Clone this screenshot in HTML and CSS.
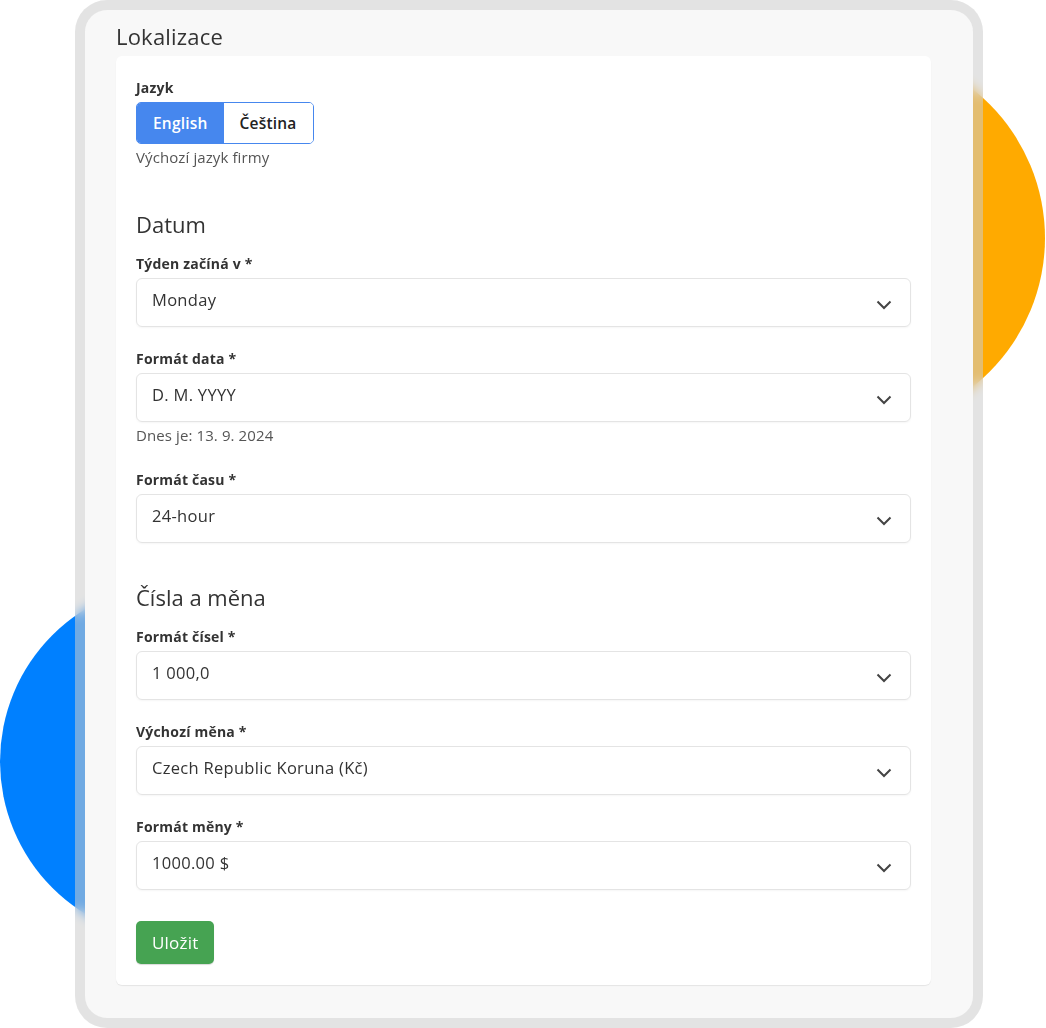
FILE: index.html
```html
<!doctype html>
<html lang="cs">
<head>
    <meta charset="utf-8">
    <title>Lokalizace</title>
    <link rel="stylesheet" href="styles.css">
</head>
<body>

<!-- Decorative circles behind the frame -->
<div class="blob blob-orange"></div>
<div class="blob blob-blue"></div>

<div class="frame">
    <h1 class="page-title">Lokalizace</h1>

    <form class="card">
        <div class="field">
            <div class="field-label">Jazyk</div>
            <div class="toggle">
                <button type="button" class="toggle-btn is-active">English</button>
                <button type="button" class="toggle-btn">Čeština</button>
            </div>
            <div class="field-help">Výchozí jazyk firmy</div>
        </div>

        <h2 class="section-title">Datum</h2>

        <div class="field">
            <div class="field-label">Týden začíná v *</div>
            <div class="select">
                <span>Monday</span>
                <svg class="chevron" viewBox="0 0 16 10"><path d="M1.5 1.5 8 8l6.5-6.5"/></svg>
            </div>
        </div>

        <div class="field">
            <div class="field-label">Formát data *</div>
            <div class="select">
                <span>D. M. YYYY</span>
                <svg class="chevron" viewBox="0 0 16 10"><path d="M1.5 1.5 8 8l6.5-6.5"/></svg>
            </div>
            <div class="field-help">Dnes je: 13. 9. 2024</div>
        </div>

        <div class="field">
            <div class="field-label">Formát času *</div>
            <div class="select">
                <span>24-hour</span>
                <svg class="chevron" viewBox="0 0 16 10"><path d="M1.5 1.5 8 8l6.5-6.5"/></svg>
            </div>
        </div>

        <h2 class="section-title">Čísla a měna</h2>

        <div class="field">
            <div class="field-label">Formát čísel *</div>
            <div class="select">
                <span>1 000,0</span>
                <svg class="chevron" viewBox="0 0 16 10"><path d="M1.5 1.5 8 8l6.5-6.5"/></svg>
            </div>
        </div>

        <div class="field">
            <div class="field-label">Výchozí měna *</div>
            <div class="select">
                <span>Czech Republic Koruna (Kč)</span>
                <svg class="chevron" viewBox="0 0 16 10"><path d="M1.5 1.5 8 8l6.5-6.5"/></svg>
            </div>
        </div>

        <div class="field">
            <div class="field-label">Formát měny *</div>
            <div class="select">
                <span>1000.00 $</span>
                <svg class="chevron" viewBox="0 0 16 10"><path d="M1.5 1.5 8 8l6.5-6.5"/></svg>
            </div>
        </div>

        <button type="button" class="btn-save">Uložit</button>
    </form>
</div>

</body>
</html>
```

FILE: styles.css
```css
:root {
    --text: #333;
    --muted: #555;
    --line: #e4e4e4;
    --blue: #4687ee;
    --green: #46a352;
    --font: "Open Sans", Lato, sans-serif;
}

* {
    box-sizing: border-box;
}

body {
    margin: 0;
    width: 1046px;
    height: 1028px;
    position: relative;
    overflow: hidden;
    background: #fff;
    font-family: var(--font);
    color: var(--text);
}

/* Decorative circles */
.blob {
    position: absolute;
    border-radius: 50%;
}

.blob-orange {
    width: 378px;
    height: 378px;
    left: 667px;
    top: 49px;
    background: #ffaa00;
}

.blob-blue {
    width: 357px;
    height: 357px;
    left: 0;
    top: 583px;
    background: #0080ff;
}

/* Device-like frame */
.frame {
    position: relative;
    margin-left: 75px;
    width: 908px;
    height: 1028px;
    padding: 13px 42px 0 31px;
    border: 10px solid rgba(204, 204, 204, 0.55);
    border-radius: 32px;
    background: #f8f8f8;
    background-clip: padding-box;
    backdrop-filter: blur(6px);
}

.page-title {
    margin: 0 0 6px;
    font-size: 22px;
    font-weight: 400;
    line-height: 27px;
    letter-spacing: 0.2px;
}

.card {
    display: flex;
    flex-direction: column;
    align-items: flex-start;
    padding: 22px 20px 21px;
    background: #fff;
    border-radius: 6px;
    box-shadow: 0 1px 1px rgba(0, 0, 0, 0.08);
}

.field {
    width: 100%;
    margin-bottom: 22px;
}

.field-label {
    margin-bottom: 4px;
    font-size: 14px;
    font-weight: 700;
    line-height: 20px;
    letter-spacing: 0.2px;
}

.field-help {
    margin: 4px 0;
    font-size: 15px;
    line-height: 18px;
    letter-spacing: 0.1px;
    color: var(--muted);
}

.section-title {
    margin: 18px 0 16px;
    font-size: 22px;
    font-weight: 400;
    line-height: 28px;
}

/* Language toggle */
.toggle {
    display: inline-flex;
    border: 1px solid var(--blue);
    border-radius: 5px;
    overflow: hidden;
}

.toggle-btn {
    height: 40px;
    padding: 0 16px;
    border: 0;
    background: #fff;
    font: 600 15.5px var(--font);
    letter-spacing: 0.2px;
    color: #222;
}

.toggle-btn.is-active {
    background: var(--blue);
    color: #fff;
}

/* Select look-alike */
.select {
    display: flex;
    align-items: center;
    justify-content: space-between;
    height: 49px;
    margin-top: 1px;
    padding: 0 18px 7px 15px;
    border: 1px solid var(--line);
    border-radius: 6px;
    box-shadow: 0 1px 2px rgba(0, 0, 0, 0.04);
    font-size: 16.5px;
    letter-spacing: 0.3px;
}

.chevron {
    width: 16px;
    height: 10px;
    margin-top: 11px;
    fill: none;
    stroke: #444;
    stroke-width: 2;
}

.btn-save {
    margin-top: 9px;
    height: 43px;
    padding: 0 16px;
    border: 0;
    border-radius: 5px;
    background: var(--green);
    color: #fff;
    font: 500 17px var(--font);
    letter-spacing: 0.2px;
    box-shadow: 0 1px 1px rgba(0, 0, 0, 0.15);
}
```
